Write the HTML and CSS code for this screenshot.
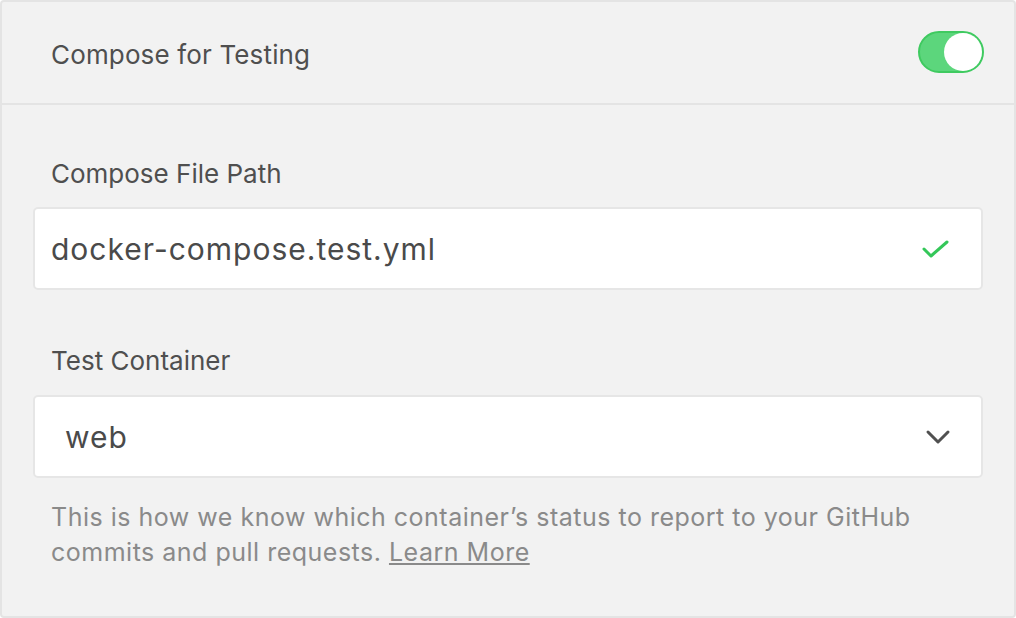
FILE: index.html
```html
<!DOCTYPE html>
<html>
<head>
<meta charset="utf-8">
<link rel="stylesheet" href="styles.css">
</head>
<body>
<div class="card">
  <div class="header">
    <div class="title">Compose for Testing</div>
    <div class="toggle"><div class="knob"></div></div>
  </div>
  <div class="body">
    <div class="label">Compose File Path</div>
    <div class="field">
      <span class="value">docker-compose.test.yml</span>
      <svg class="icon" width="30" height="20" viewBox="0 0 30 20"><path d="M3 10 L10 17 L26 3" fill="none" stroke="#34c759" stroke-width="3" stroke-linecap="round" stroke-linejoin="round"/></svg>
    </div>
    <div class="label second">Test Container</div>
    <div class="field select">
      <span class="value">web</span>
      <svg class="icon" width="26" height="16" viewBox="0 0 26 16"><path d="M3 3 L13 13 L23 3" fill="none" stroke="#505050" stroke-width="3" stroke-linecap="round" stroke-linejoin="round"/></svg>
    </div>
    <p class="help">This is how we know which container’s status to report to your GitHub commits and pull requests. <a href="#">Learn More</a></p>
  </div>
</div>
</body>
</html>
```
FILE: styles.css
```css
* { box-sizing: border-box; }
html, body { margin: 0; padding: 0; }
body {
  width: 1016px;
  height: 618px;
  font-family: Inter, "Open Sans", sans-serif;
  background: #fff;
}
.card {
  width: 1016px;
  height: 618px;
  background: #f2f2f2;
  border: 2px solid #e4e4e4;
  border-radius: 4px;
  color: #4f4f4f;
}
.header {
  height: 103px;
  border-bottom: 2px solid #e4e4e4;
  display: flex;
  align-items: center;
  justify-content: space-between;
  padding: 0 30px 0 49px;
}
.title {
  font-size: 26px;
  letter-spacing: 0.15px;
  margin-top: 3px;
}
.toggle {
  width: 66px;
  height: 42px;
  border-radius: 21px;
  background: #5cd67c;
  border: 2px solid #3fca60;
  display: flex;
  justify-content: flex-end;
  align-items: center;
  margin-top: -2px;
}
.knob {
  width: 38px;
  height: 38px;
  border-radius: 50%;
  background: #fff;
}
.body {
  padding: 54px 31px 0 31px;
}
.label {
  font-size: 26px;
  padding-left: 18px;
  line-height: 30px;
}
.label.second { margin-top: 56px; }
.field {
  margin-top: 18px;
  height: 83px;
  background: #fff;
  border: 2px solid #e6e6e6;
  border-radius: 5px;
  display: flex;
  align-items: center;
  justify-content: space-between;
  padding: 0 30px 0 16px;
}
.field .value {
  font-size: 30px;
  letter-spacing: 1px;
  color: #4a4a4a;
}
.field.select { margin-top: 19px; }
.field.select .value { padding-left: 14px; }
.help {
  margin: 22px 0 0 0;
  padding: 0 40px 0 18px;
  font-size: 25px;
  letter-spacing: 0.5px;
  line-height: 35px;
  color: #8a8a8a;
}
.help a { color: #8a8a8a; text-decoration: underline; }
```
